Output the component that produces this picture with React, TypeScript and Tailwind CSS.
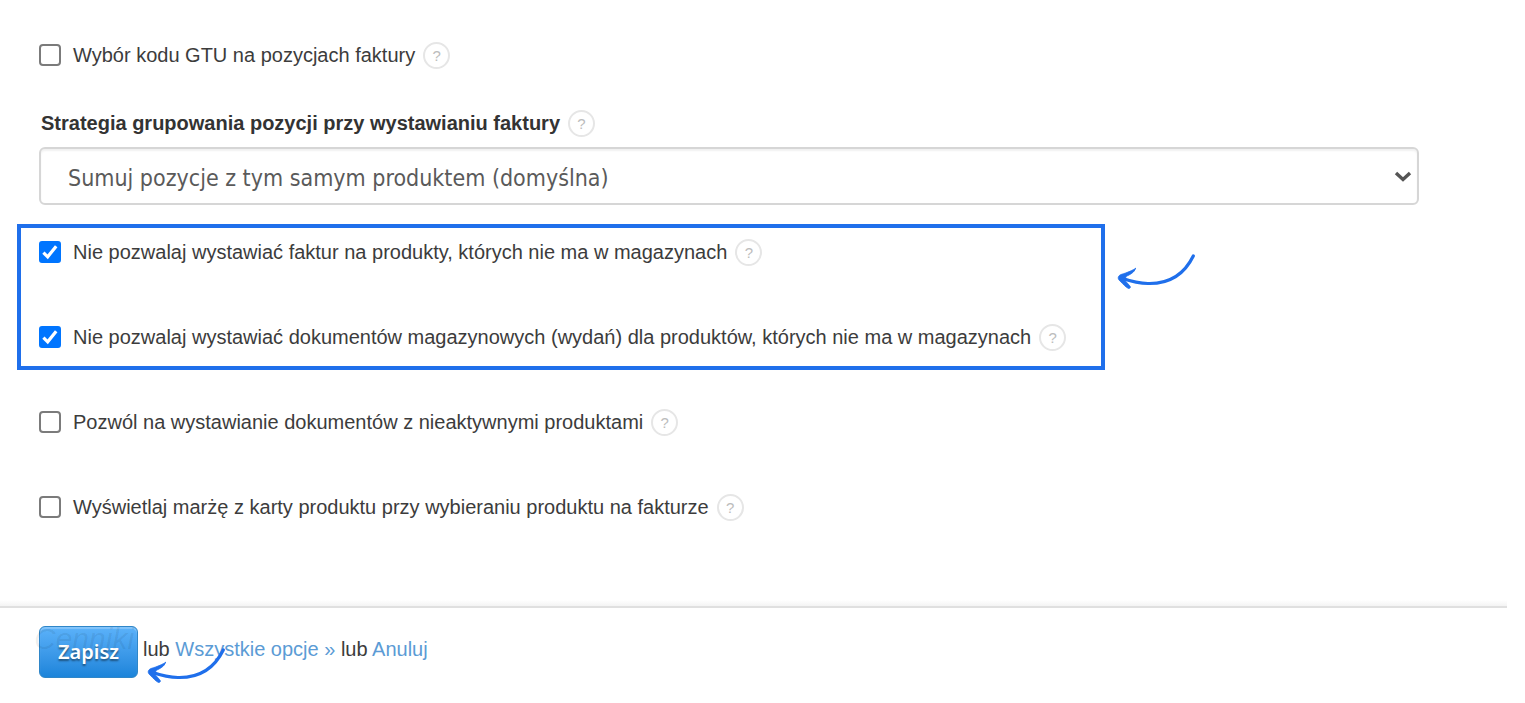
import { useState } from "react";

function Help({ topic }: { topic: string }) {
  return (
    <button
      type="button"
      aria-label={`Pomoc: ${topic}`}
      className="flex size-[27px] shrink-0 items-center justify-center rounded-full border-2 border-[#e6e6e6] bg-white text-[15px] leading-none text-[#bcbcbc]"
    >
      ?
    </button>
  );
}

function Option({ id, label, initial = false }: { id: string; label: string; initial?: boolean }) {
  const [checked, setChecked] = useState(initial);
  return (
    <div className="flex h-7 items-center">
      <span className="relative mr-3 size-[22px] shrink-0">
        <input
          id={id}
          type="checkbox"
          checked={checked}
          onChange={(e) => setChecked(e.target.checked)}
          className="block size-[22px] appearance-none rounded-[4px] border-2 border-[#7b7b7b] bg-white checked:rounded-[3px] checked:border-[#0075ff] checked:bg-[#0075ff]"
        />
        {checked && (
          <svg viewBox="0 0 22 22" className="pointer-events-none absolute inset-0 size-[22px]" aria-hidden="true">
            <path d="M4.4 11.6 L8.7 15.8 L17.2 5.2" fill="none" stroke="#fff" strokeWidth="3.200" />
          </svg>
        )}
      </span>
      <label htmlFor={id} className="mr-2 whitespace-nowrap">
        {label}
      </label>
      <Help topic={label} />
    </div>
  );
}

function Arrow() {
  return (
    <svg viewBox="0 0 78 36" className="h-9 w-[78px] shrink-0" fill="none" stroke="#1f6feb" strokeLinecap="round" strokeLinejoin="round" aria-hidden="true">
      <path d="M76.300 2 C68 19 53 30 31 29.500 C22 29.500 13 27 4 24" strokeWidth="3.200" />
      <path
        d="M18.500 14.500 C16 16 11 18.500 4 20.500 C0.500 22 0.500 25 3 27 C6 30 9 33.500 11.500 34.500 C13.500 34.500 14 33 12.500 31.500 L8 26.500 L9 22.500 C13 20.500 17.500 18.500 18.500 14.500 Z"
        fill="#1f6feb"
        strokeWidth="0.800"
      />
    </svg>
  );
}

export default function App() {
  return (
    <form
      onSubmit={(e) => e.preventDefault()}
      className="min-h-screen bg-white font-['Liberation_Sans',Arial,sans-serif] text-[20px] leading-7 text-[#3c3c3c]"
    >
      <main className="pt-[41px] pr-[106px] pl-[39px]">
        <Option id="gtu" label="Wybór kodu GTU na pozycjach faktury" />

        <div className="mt-10 flex h-7 items-center pl-0.5">
          <label htmlFor="grouping" className="mr-2 font-bold text-[#333]">
            Strategia grupowania pozycji przy wystawianiu faktury
          </label>
          <Help topic="Strategia grupowania" />
        </div>
        <div className="relative mt-[10px]">
          <select
            id="grouping"
            className="block h-[58px] w-full appearance-none rounded-md border-2 border-[#d6d6d6] bg-white pt-[3px] pr-12 pl-[27px] font-['DejaVu_Sans_Condensed','Noto_Sans',sans-serif] text-[23px] leading-[36px] text-[#5a5a5a] shadow-[inset_0_2px_2px_rgba(0,0,0,0.06)]"
          >
            <option>Sumuj pozycje z tym samym produktem (domyślna)</option>
          </select>
          <svg viewBox="0 0 18 12" className="pointer-events-none absolute top-6 right-[7px] h-3 w-[18px]" aria-hidden="true">
            <path d="M2 2 L9 8.500 L16 2" fill="none" stroke="#555" strokeWidth="3.400" />
          </svg>
        </div>

        <div className="mt-[19px] -ml-[22px] flex items-start gap-3">
          <section className="flex flex-col gap-[57px] border-4 border-[#1f6feb] pt-[10px] pr-[35px] pb-[15px] pl-[18px]">
            <Option id="invoices" initial label="Nie pozwalaj wystawiać faktur na produkty, których nie ma w magazynach" />
            <Option
              id="documents"
              initial
              label="Nie pozwalaj wystawiać dokumentów magazynowych (wydań) dla produktów, których nie ma w magazynach"
            />
          </section>
          <div className="pt-[30px]">
            <Arrow />
          </div>
        </div>

        <div className="mt-[38px] flex flex-col gap-[57px]">
          <Option id="inactive" label="Pozwól na wystawianie dokumentów z nieaktywnymi produktami" />
          <Option id="margin" label="Wyświetlaj marżę z karty produktu przy wybieraniu produktu na fakturze" />
        </div>
      </main>

      <footer className="mt-[79px] mr-[18px]">
        <div className="h-2 border-b-2 border-[#e0e0e0] bg-linear-to-b from-white to-[#f4f4f4]" />
        <div className="flex items-start pt-[18px] pl-[39px]">
          <div className="relative">
            <button
              type="submit"
              className="h-[52px] w-[99px] rounded-md border border-[#2f86c8] bg-linear-to-b from-[#5bb2fa] to-[#1b84da] font-['Noto_Sans','Open_Sans',sans-serif] text-[20px] font-semibold text-white shadow-[inset_0_2px_1px_rgba(255,255,255,0.25)] [text-shadow:0_2px_2px_rgba(0,0,0,0.45)]"
            >
              Zapisz
            </button>
            <span className="pointer-events-none absolute -top-px -left-[5px] text-[30px] text-black/8 italic">Cenniki</span>
          </div>
          <div className="relative pt-[9px] pl-[5px]">
            lub{" "}
            <a href="#opcje" className="text-[#5b9bd5]">
              Wszystkie opcje »
            </a>{" "}
            lub{" "}
            <a href="#anuluj" className="text-[#5b9bd5]">
              Anuluj
            </a>
            <div className="pointer-events-none absolute top-[22px] left-[9px]">
              <Arrow />
            </div>
          </div>
        </div>
      </footer>
    </form>
  );
}
